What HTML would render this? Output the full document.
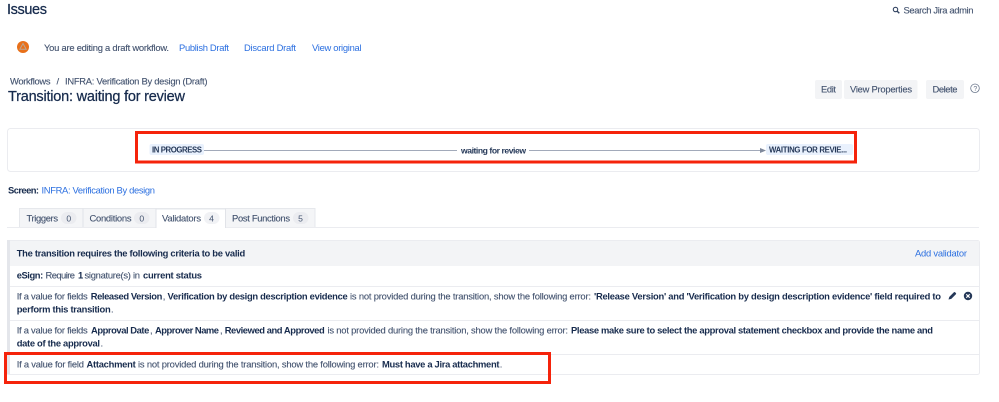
<!DOCTYPE html>
<html><head><meta charset="utf-8"><style>
html,body{margin:0;padding:0;background:#fff;width:999px;height:402px;overflow:hidden}
svg{display:block;filter:blur(.3px)}
text{font-family:"Liberation Sans",sans-serif;font-size:9.4px;fill:#3c4a66}
.b{font-weight:700;fill:#172b4d}
.l{fill:#2b6fe0}
.s{font-weight:700;font-size:8.6px;fill:#253858}
.k{font-weight:700;font-size:7.8px;fill:#253858}
.t{fill:#42526e;stroke:#42526e;stroke-width:.12px}
.h{font-size:14.5px;fill:#172b4d;stroke:#172b4d;stroke-width:.25px}
.c{font-size:8.6px;fill:#42526e;text-anchor:middle}
</style></head><body>
<svg width="999" height="402" viewBox="0 0 999 402" xmlns="http://www.w3.org/2000/svg">
<rect width="999" height="402" fill="#fff"/>
<text x="7" y="14" textLength="40" lengthAdjust="spacing" class="h">Issues</text>
<circle cx="895.5" cy="9.5" r="2.2" fill="none" stroke="#344563" stroke-width="1.1"/><path d="M897 11l2.3 2.3" stroke="#344563" stroke-width="1.4"/>
<text x="903.500" y="13.300" textLength="70" lengthAdjust="spacing" class="t">Search Jira admin</text>

<circle cx="23" cy="47" r="6" fill="#e8701a"/><path d="M23 43.500l3.200 5.800h-6.400z" fill="none" stroke="#b9a594" stroke-width="1"/>
<text x="44" y="51" textLength="125" lengthAdjust="spacing" class="t">You are editing a draft workflow.</text>
<text x="179" y="51" textLength="50" lengthAdjust="spacing" class="l">Publish Draft</text>
<text x="244" y="51" textLength="52" lengthAdjust="spacing" class="l">Discard Draft</text>
<text x="312" y="51" textLength="49.500" lengthAdjust="spacing" class="l">View original</text>

<text x="10" y="84.300" textLength="40.500" lengthAdjust="spacing" class="t">Workflows</text>
<text x="56.500" y="84.300" class="t">/</text>
<text x="65" y="84.300" textLength="142.500" lengthAdjust="spacing" class="t">INFRA: Verification By design (Draft)</text>
<text x="8" y="101" textLength="177" lengthAdjust="spacing" class="h">Transition: waiting for review</text>

<rect x="815" y="80" width="27" height="19" rx="2" fill="#f3f4f6"/>
<rect x="844" y="80" width="73.500" height="19" rx="2" fill="#f3f4f6"/>
<rect x="926" y="80" width="38" height="19" rx="2" fill="#f3f4f6"/>
<text x="821" y="92.300" textLength="15" lengthAdjust="spacing" class="t">Edit</text>
<text x="850" y="92.300" textLength="62" lengthAdjust="spacing" class="t">View Properties</text>
<text x="932.500" y="92.300" textLength="25" lengthAdjust="spacing" class="t">Delete</text>
<circle cx="975" cy="88.300" r="4.300" fill="none" stroke="#6b778c" stroke-width=".8"/>
<text x="973.400" y="91" style="font-size:7px;fill:#6b778c">?</text>

<rect x="7.500" y="128.500" width="972" height="43" rx="3" fill="#fff" stroke="#ebecf0"/>
<rect x="149.500" y="144" width="54.500" height="11" rx="2" fill="#e9f1fd"/>
<text x="152" y="152.500" textLength="50" lengthAdjust="spacing" class="k">IN PROGRESS</text>
<path d="M204 150.500H457M529 150.500H761" stroke="#a2aaba" stroke-width="1"/>
<path d="M760 148l6 2.500-6 2.500z" fill="#7f899c"/>
<text x="461" y="153.500" textLength="65" lengthAdjust="spacing" class="s">waiting for review</text>
<rect x="766" y="144" width="87" height="11" rx="2" fill="#e9f1fd"/>
<text x="769" y="152.500" textLength="78" lengthAdjust="spacing" class="k">WAITING FOR REVIE...</text>
<rect x="136.500" y="132.500" width="719" height="29.500" fill="none" stroke="#f5230b" stroke-width="3"/>

<text x="8" y="193.500" textLength="31" lengthAdjust="spacing" class="b">Screen:</text>
<text x="41.500" y="193.500" textLength="113.500" lengthAdjust="spacing" class="l">INFRA: Verification By design</text>

<path d="M7 227.500H979" stroke="#ebecf0"/>
<path d="M19.500 227V208.500H315V227" fill="#f4f5f7" stroke="#e6e8ec"/>
<path d="M83 208.500V227" stroke="#e1e3e8"/>
<rect x="156" y="208.500" width="69" height="20" fill="#fff"/>
<path d="M156 209H225" stroke="#e6e8ec"/><path d="M156 208.500V228M225.500 208.500V228" stroke="#e1e3e8"/>
<rect x="61" y="212" width="15.500" height="12" rx="6" fill="#ebecf0"/>
<rect x="134" y="212" width="15.500" height="12" rx="6" fill="#ebecf0"/>
<rect x="204" y="212" width="15.500" height="12" rx="6" fill="#f1f2f5"/>
<rect x="293" y="212" width="15.500" height="12" rx="6" fill="#ebecf0"/>
<text x="26.500" y="221.500" textLength="31.500" lengthAdjust="spacing" class="t">Triggers</text>
<text x="68.800" y="221.300" class="c">0</text>
<text x="89.500" y="221.500" textLength="42" lengthAdjust="spacing" class="t">Conditions</text>
<text x="141.800" y="221.300" class="c">0</text>
<text x="162" y="221.500" textLength="39" lengthAdjust="spacing" class="t">Validators</text>
<text x="211.500" y="221.300" class="c">4</text>
<text x="232" y="221.500" textLength="58" lengthAdjust="spacing" class="t">Post Functions</text>
<text x="300.500" y="221.300" class="c">5</text>

<rect x="7.500" y="240.500" width="972" height="134" rx="2" fill="#fff" stroke="#ebecf0"/>
<rect x="8" y="241" width="971" height="25" fill="#f3f4f6"/>
<rect x="7" y="240" width="3" height="134.500" fill="#e4e6eb"/>
<path d="M10 286.500H979M10 320.500H979M10 354.500H979" stroke="#ebecf0"/>
<text x="16.700" y="256.300" textLength="228.500" lengthAdjust="spacing" class="b">The transition requires the following criteria to be valid</text>
<text x="915" y="256.300" textLength="52" lengthAdjust="spacing" class="l">Add validator</text>

<text x="16.700" y="278.300" textLength="26.500" lengthAdjust="spacing" class="b">eSign:</text>
<text x="45.500" y="278.300" textLength="29.500" lengthAdjust="spacing" class="t">Require</text>
<text x="78" y="278.300" class="b">1</text>
<text x="84.500" y="278.300" textLength="55.500" lengthAdjust="spacing" class="t">signature(s) in</text>
<text x="143" y="278.300" textLength="59" lengthAdjust="spacing" class="b">current status</text>

<text x="16.700" y="299.300" textLength="71" lengthAdjust="spacing" class="t">If a value for fields</text>
<text x="90.700" y="299.300" textLength="71.600" lengthAdjust="spacing" class="b">Released Version</text>
<text x="162.800" y="299.300" class="t">,</text>
<text x="167.500" y="299.300" textLength="180.200" lengthAdjust="spacing" class="b">Verification by design description evidence</text>
<text x="350" y="299.300" textLength="241" lengthAdjust="spacing" class="t">is not provided during the transition, show the following error:</text>
<text x="594" y="299.300" textLength="347" lengthAdjust="spacing" class="b">'Release Version' and 'Verification by design description evidence' field required to</text>
<text x="16.700" y="312.300" textLength="94" lengthAdjust="spacing" class="b">perform this transition</text>
<text x="111" y="312.300" class="t">.</text>
<path d="M948.500 299.500l.8-2.600 4.600-4.600q.6-.6 1.200 0l.8.8q.6.6 0 1.200l-4.600 4.600z" fill="#253858"/>
<circle cx="968" cy="296" r="4.200" fill="#253858"/>
<path d="M966.300 294.300l3.400 3.400M969.700 294.300l-3.400 3.400" stroke="#fff" stroke-width="1.100"/>

<text x="16.700" y="333.300" textLength="71" lengthAdjust="spacing" class="t">If a value for fields</text>
<text x="91" y="333.300" textLength="58.300" lengthAdjust="spacing" class="b">Approval Date</text>
<text x="150" y="333.300" class="t">,</text>
<text x="155" y="333.300" textLength="64" lengthAdjust="spacing" class="b">Approver Name</text>
<text x="220" y="333.300" class="t">,</text>
<text x="224.700" y="333.300" textLength="100" lengthAdjust="spacing" class="b">Reviewed and Approved</text>
<text x="327.500" y="333.300" textLength="240.500" lengthAdjust="spacing" class="t">is not provided during the transition, show the following error:</text>
<text x="571" y="333.300" textLength="362" lengthAdjust="spacing" class="b">Please make sure to select the approval statement checkbox and provide the name and</text>
<text x="16.700" y="346.300" textLength="83.300" lengthAdjust="spacing" class="b">date of the approval</text>
<text x="100.500" y="346.300" class="t">.</text>

<text x="16.700" y="367.300" textLength="67.300" lengthAdjust="spacing" class="t">If a value for field</text>
<text x="86.500" y="367.300" textLength="49.200" lengthAdjust="spacing" class="b">Attachment</text>
<text x="138" y="367.300" textLength="241" lengthAdjust="spacing" class="t">is not provided during the transition, show the following error:</text>
<text x="382" y="367.300" textLength="117.500" lengthAdjust="spacing" class="b">Must have a Jira attachment</text>
<text x="499.800" y="367.300" class="t">.</text>
<rect x="5.500" y="353.500" width="544" height="29" fill="none" stroke="#f5230b" stroke-width="3"/>
</svg>
</body></html>
